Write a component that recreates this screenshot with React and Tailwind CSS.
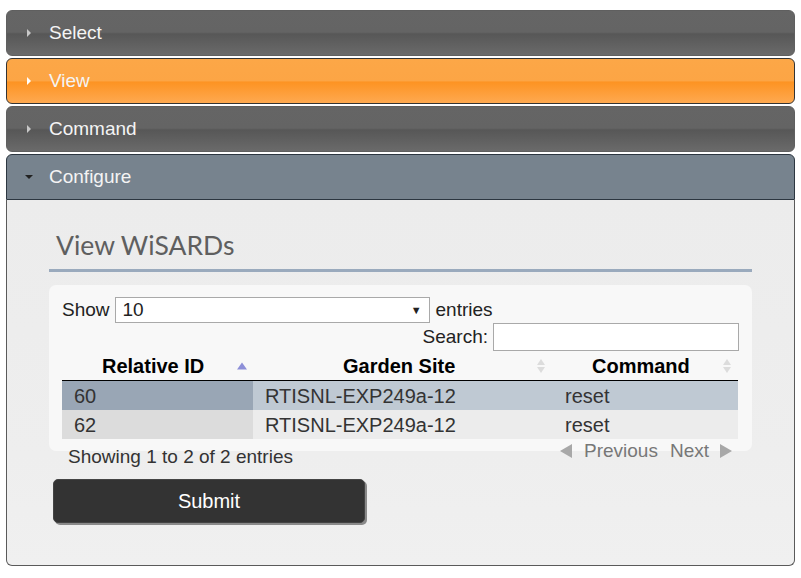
import { useState } from "react";

const sections = ["Select", "View", "Command", "Configure"];

const rows = [
  { id: "60", site: "RTISNL-EXP249a-12", command: "reset" },
  { id: "62", site: "RTISNL-EXP249a-12", command: "reset" },
];

function Arrow({ open, color }) {
  if (open) {
    return (
      <svg width="10" height="6" viewBox="0 0 10 6" className="shrink-0">
        <path d="M1 1h8L5 5z" fill="#222" />
      </svg>
    );
  }
  return (
    <svg width="6" height="10" viewBox="0 0 6 10" className="shrink-0">
      <path d="M1 1v8l4-4z" fill={color} />
    </svg>
  );
}

function SortIcon({ active }) {
  if (active) {
    return (
      <svg width="12" height="10" viewBox="0 0 12 10">
        <path d="M1 8.5h10L6 1.5z" fill="#8d8fd8" />
      </svg>
    );
  }
  return (
    <svg width="12" height="18" viewBox="0 0 12 18">
      <path d="M2 8h8L6 2z" fill="#dcdcdc" />
      <path d="M2 10h8l-4 6z" fill="#dcdcdc" />
    </svg>
  );
}

export default function App() {
  const [open] = useState("Configure");

  const headerClass = (name) => {
    if (name === "View")
      return "bg-[linear-gradient(to_bottom,#fca747_0%,#fca545_50%,#fd9322_52%,#fea950_100%)] border border-[#333] rounded-[6px]";
    if (name === "Configure")
      return "bg-[#77838e] border border-[#2c3640] rounded-t-[6px]";
    return "bg-[linear-gradient(to_bottom,#656565_0%,#646464_48%,#575757_52%,#6a6a6a_100%)] border border-[#5f5f5f] rounded-[6px]";
  };

  return (
    <div className="w-[801px] h-[578px] bg-white pt-[10px] px-[6px] font-['Liberation_Sans',Arial,sans-serif]">
      <div className="flex flex-col gap-[2px]">
        {sections.map((name) => (
          <div key={name}>
            <div
              className={`h-[46px] flex items-center gap-[15px] pl-[17px] ${headerClass(name)}`}
            >
              <span className="w-[10px] flex justify-center">
                <Arrow open={open === name} color={name === "View" ? "#ffffff" : "#c8c8c8"} />
              </span>
              <span className="text-[19px] text-[#f4f4f4]">{name}</span>
            </div>
            {open === name && (
              <div className="h-[366px] border border-t-0 border-[#5a5a5a] rounded-b-[6px] bg-[linear-gradient(to_bottom,#ececec_0%,#eeeeee_70%,#f0f0f0_100%)] px-[42px] pt-[29px]">
                <h2 className="text-[26.5px] text-[#5f5f5f] font-['Lato',sans-serif] pl-[7px] leading-[32px] pb-[8px] border-b-[3px] border-[#9aaabd]">
                  View WiSARDs
                </h2>

                <div className="mt-[13px] bg-[#f8f8f8] rounded-[7px] pl-[13px] pr-[12px] pt-[12px] pb-[12px] text-[19px] text-[#222]">
                  <div className="flex items-center h-[26px]">
                    <span>Show</span>
                    <div className="ml-[5px] w-[315px] h-[26px] bg-white border border-[#a9a9a9] flex items-center justify-between px-[7px]">
                      <span>10</span>
                      <span className="text-[11px]">▼</span>
                    </div>
                    <span className="ml-[6px]">entries</span>
                  </div>
                  <div className="flex items-center justify-end h-[28px]">
                    <span className="mr-[5px]">Search:</span>
                    <div className="w-[246px] h-[28px] mr-[1px] bg-white border border-[#a9a9a9]" />
                  </div>
                  <div className="grid grid-cols-[191px_300px_185px]">
                    <div className="h-[30px] flex items-center justify-between border-b border-black pl-[40px] pr-[5px] text-[20px] font-bold text-black">
                      <span>Relative ID</span>
                      <SortIcon active />
                    </div>
                    <div className="h-[30px] flex items-center justify-between border-b border-black pl-[90px] pr-[6px] text-[20px] font-bold text-black">
                      <span>Garden Site</span>
                      <SortIcon />
                    </div>
                    <div className="h-[30px] flex items-center justify-between border-b border-black pl-[39px] pr-[5px] text-[20px] font-bold text-black">
                      <span>Command</span>
                      <SortIcon />
                    </div>
                    {rows.map((r, i) => (
                      <div key={r.id} className="contents">
                        <div className={`h-[29px] flex items-center pl-[12px] text-[20px] ${i === 0 ? "bg-[#99a6b5]" : "bg-[#dcdcdc]"} text-[#333]`}>
                          {r.id}
                        </div>
                        <div className={`h-[29px] flex items-center pl-[12px] text-[20px] ${i === 0 ? "bg-[#bfc9d3]" : "bg-[#ececec]"} text-[#333]`}>
                          {r.site}
                        </div>
                        <div className={`h-[29px] flex items-center pl-[12px] text-[20px] ${i === 0 ? "bg-[#bfc9d3]" : "bg-[#ececec]"} text-[#333]`}>
                          {r.command}
                        </div>
                      </div>
                    ))}
                  </div>
                </div>

                <div className="flex items-start justify-between pl-[19px] pr-[18px] -mt-[14px] text-[19px]">
                  <span className="mt-[6px] text-[#333]">Showing 1 to 2 of 2 entries</span>
                  <div className="flex items-center gap-[12px] text-[#777]">
                    <span className="flex items-center gap-[10px]">
                      <svg width="16" height="16" viewBox="0 0 16 16">
                        <path d="M14 1v14L2 8z" fill="#a8a8a8" />
                      </svg>
                      Previous
                    </span>
                    <span className="flex items-center gap-[9px]">
                      Next
                      <svg width="16" height="16" viewBox="0 0 16 16">
                        <path d="M2 1v14l12-7z" fill="#a8a8a8" />
                      </svg>
                    </span>
                  </div>
                </div>

                <button className="mt-[7px] ml-[4px] w-[312px] h-[44px] bg-[#333] text-white text-[20px] rounded-[5px] border border-[#444] shadow-[2px_2px_0_#8a8a8a]">
                  Submit
                </button>
              </div>
            )}
          </div>
        ))}
      </div>
    </div>
  );
}
